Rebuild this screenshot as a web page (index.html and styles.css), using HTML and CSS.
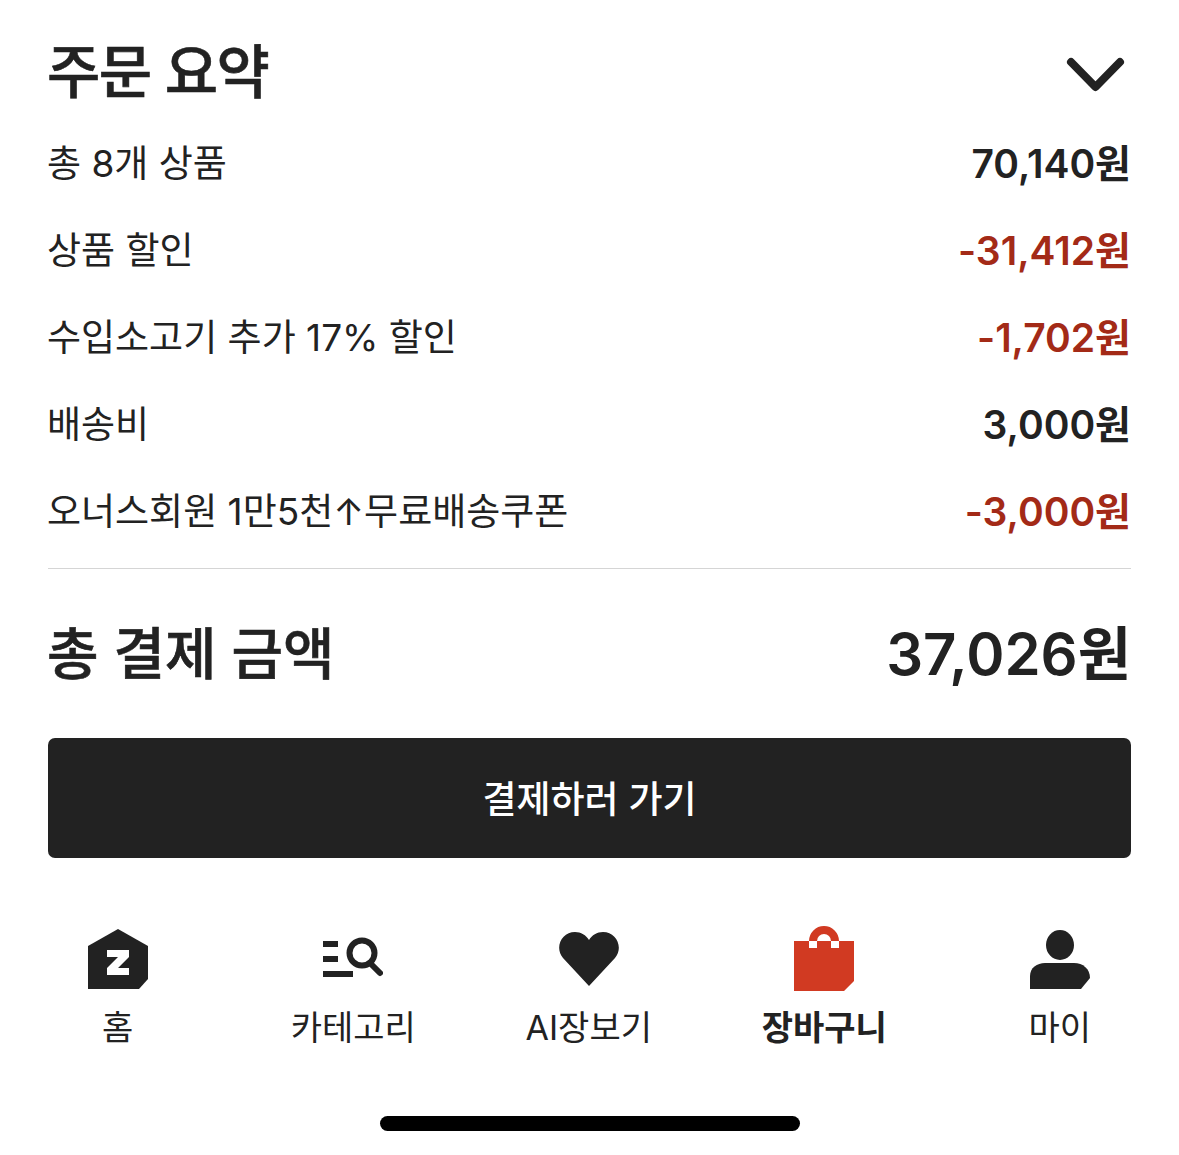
FILE: index.html
```html
<!DOCTYPE html>
<html lang="ko">
<head>
    <meta charset="UTF-8">
    <meta name="viewport" content="width=device-width, initial-scale=1.0">
    <title>주문 요약</title>
    <link rel="stylesheet" href="styles.css">
</head>
<body>

    <main class="summary">
        <div class="summary-head">
            <h2>주문 요약</h2>
            <svg class="chevron" width="60" height="40" viewBox="0 0 60 40">
                <path d="M5 6 L29.500 31 L54 6" fill="none" stroke="#222" stroke-width="8" stroke-linecap="round" stroke-linejoin="round"/>
            </svg>
        </div>

        <div class="rows">
            <div class="row"><span>총 8개 상품</span><b>70,140원</b></div>
            <div class="row"><span>상품 할인</span><b class="minus">-31,412원</b></div>
            <div class="row"><span>수입소고기 추가 17% 할인</span><b class="minus">-1,702원</b></div>
            <div class="row"><span>배송비</span><b>3,000원</b></div>
            <div class="row"><span>오너스회원 1만5천↑무료배송쿠폰</span><b class="minus">-3,000원</b></div>
        </div>

        <div class="total">
            <h3>총 결제 금액</h3>
            <strong>37,026원</strong>
        </div>

        <button type="button" class="pay">결제하러 가기</button>
    </main>

    <nav class="tabs">
        <a class="tab">
            <svg width="60" height="66" viewBox="0 0 60 66">
                <path d="M30 3 L60 20 V53 L51 63 H0 V20 Z" fill="#222"/>
                <path d="M19 24 H41 V31 L30 42 H41 V49 H19 V42 L30 31 H19 Z" fill="#fff"/>
            </svg>
            <span>홈</span>
        </a>
        <a class="tab">
            <svg width="60" height="66" viewBox="0 0 60 66">
                <path d="M0 15 H15 V21 H0 Z M0 30 H15 V36 H0 Z M0 45 H30 V51 H0 Z" fill="#222"/>
                <circle cx="39" cy="27" r="12.500" fill="none" stroke="#222" stroke-width="6"/>
                <path d="M47 37 L57 47" fill="none" stroke="#222" stroke-width="6" stroke-linecap="round"/>
            </svg>
            <span>카테고리</span>
        </a>
        <a class="tab">
            <svg width="60" height="66" viewBox="0 0 60 66">
                <path d="M30 60 L4 32 C-5 21 3 6 16 6 C22 6 27 9 30 14 C33 9 38 6 44 6 C57 6 65 21 56 32 Z" fill="#222"/>
            </svg>
            <span>AI장보기</span>
        </a>
        <a class="tab active">
            <svg width="60" height="66" viewBox="0 0 60 66">
                <path d="M0 15 H15 A15 15 0 0 1 45 15 H60 V55 L50 65 H0 Z" fill="#d13a22"/>
                <path d="M23 15 A7 7 0 0 1 37 15 Z" fill="#fff"/>
                <path d="M15 15 H23 V22 H15 Z M37 15 H45 V22 H37 Z" fill="#fff"/>
            </svg>
            <span>장바구니</span>
        </a>
        <a class="tab">
            <svg width="60" height="66" viewBox="0 0 60 66">
                <ellipse cx="30" cy="19" rx="14" ry="15" fill="#222"/>
                <path d="M0 63 V50 C0 42 7 37 15 37 H44 C53 37 60 43 60 52 L51 63 Z" fill="#222"/>
            </svg>
            <span>마이</span>
        </a>
    </nav>

    <div class="home-bar"></div>

</body>
</html>
```

FILE: styles.css
```css
body {
    font-family: 'Inter', 'Noto Sans CJK KR', sans-serif;
    margin: 0;
    padding: 0;
    background-color: #fff;
    color: #222;
}

h2, h3 {
    margin: 0;
}

.summary {
    padding: 32px 48px 0;
}

.summary-head {
    display: flex;
    justify-content: space-between;
    align-items: center;
    height: 80px;
}

.summary-head h2 {
    margin-left: -1px;
    font-size: 58px;
    font-weight: 500;
    line-height: 80px;
    letter-spacing: -1.500px;
    -webkit-text-stroke: 0.600px #222;
}

.chevron {
    margin-top: 7px;
    margin-right: 5px;
}

.rows {
    margin-top: 5px;
    padding-bottom: 16px;
    border-bottom: 1px solid #d5d5d5;
}

.row {
    display: flex;
    justify-content: space-between;
    align-items: center;
    height: 87px;
    font-size: 37px;
}

.row span {
    margin-left: -1px;
}

.row b {
    font-size: 39px;
    font-weight: 600;
}

.row b.minus {
    color: #a32a17;
}

.total {
    display: flex;
    justify-content: space-between;
    align-items: center;
    height: 169px;
    padding-bottom: 8px;
    box-sizing: border-box;
}

.total h3 {
    margin-left: -1px;
    font-size: 56px;
    font-weight: 500;
    -webkit-text-stroke: 0.600px #222;
}

.total strong {
    font-size: 58px;
    font-weight: 600;
}

.pay {
    display: block;
    width: 100%;
    height: 120px;
    padding-bottom: 3px;
    border: none;
    border-radius: 7px;
    background-color: #222;
    color: #fff;
    font-family: inherit;
    font-size: 37px;
    font-weight: 500;
}

.tabs {
    display: grid;
    grid-template-columns: repeat(5, 1fr);
    margin-top: 68px;
    padding-right: 1.500px;
}

.tab {
    display: flex;
    flex-direction: column;
    align-items: center;
    gap: 13px;
    font-size: 34px;
    line-height: 46px;
}

.tab.active {
    font-weight: 700;
}

.home-bar {
    width: 420px;
    height: 15px;
    margin: 65px auto 0;
    border-radius: 8px;
    background-color: #000;
}
```
